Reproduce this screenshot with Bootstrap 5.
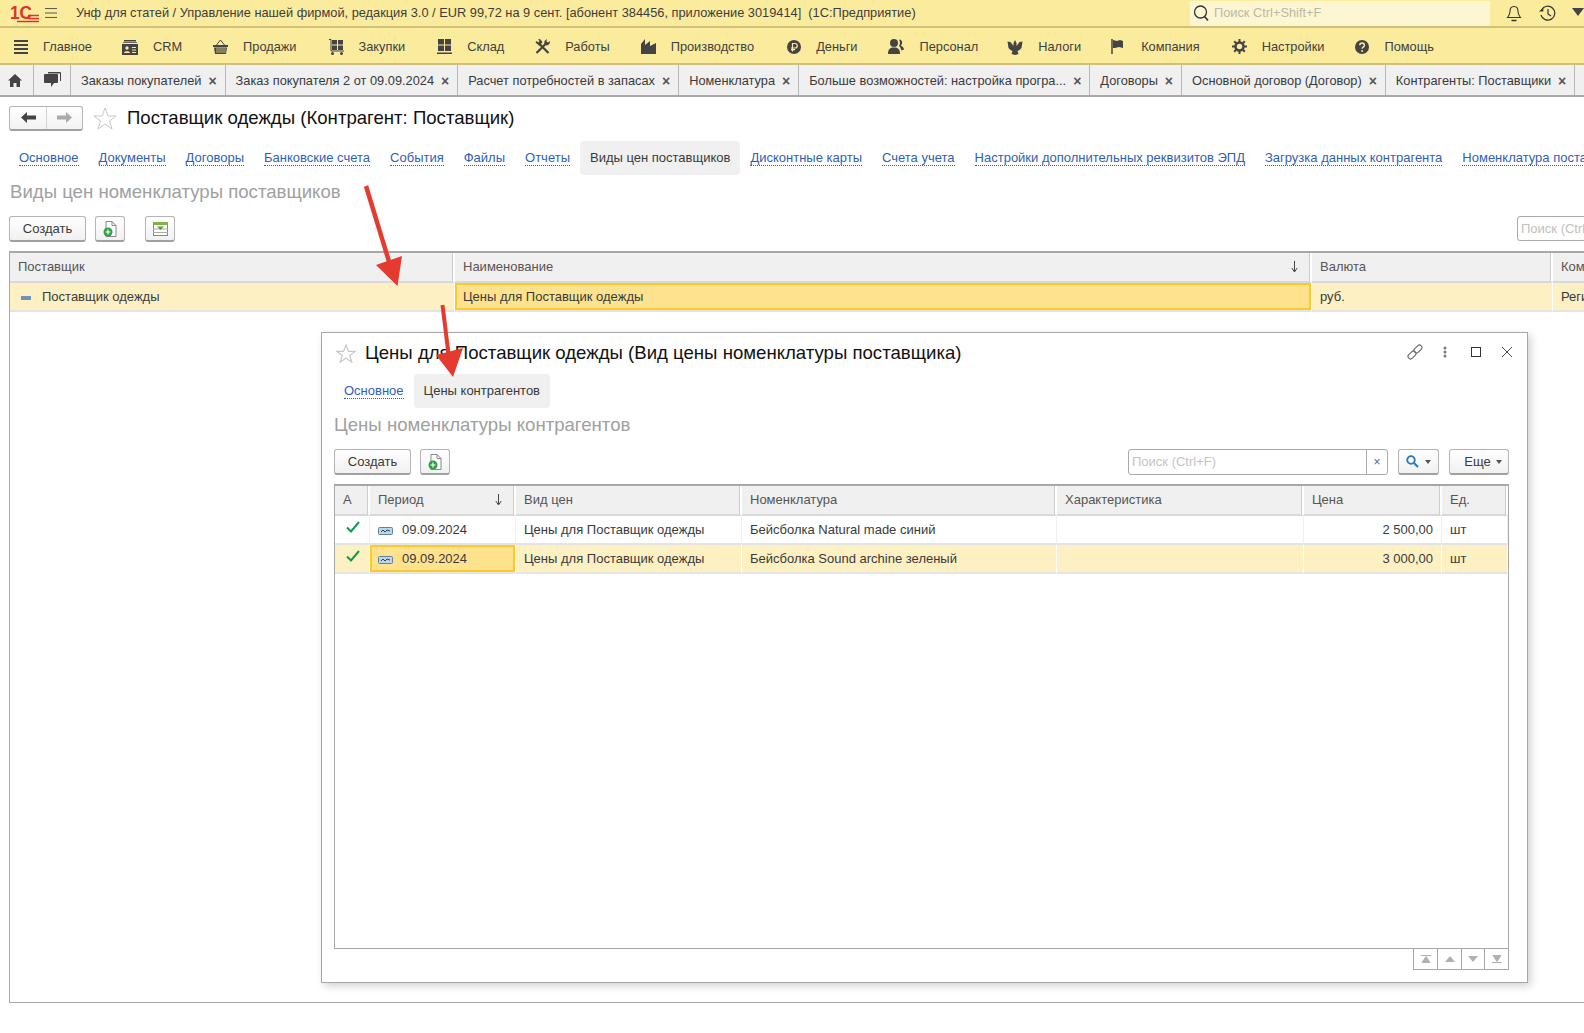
<!DOCTYPE html>
<html lang="ru">
<head>
<meta charset="utf-8">
<title>1С</title>
<link href="https://cdn.jsdelivr.net/npm/bootstrap@5.3.0/dist/css/bootstrap.min.css" rel="stylesheet">
<style>
html,body{height:100%;}
body{width:1584px;height:1033px;overflow:hidden;position:relative;background:#fff;font-family:"Liberation Sans",Arial,sans-serif;font-size:13px;color:#333;}
.title-bar{height:28px;background:#fbeb9d;border-bottom:2px solid #d0c07a;font-size:12.8px;}
.logo-box{width:42px;margin-left:10px;}
.menu-ico{margin-left:1px;margin-right:19px;}
.title-text{color:#3d3d3d;white-space:pre;width:1114px;flex:none;}
.global-search{width:300px;height:25px;background:#fdf6d3;border-radius:0 0 3px 3px;color:#bdb9a3;padding-left:3px;flex:none;}
.top-ico{margin-left:16px;flex:none;}
.sec-bar{height:37px;background:#fbeb9d;border-bottom:2px solid #d0c07a;padding:2px 0 0 14px;font-size:12.8px;}
.sec-item{display:flex;align-items:center;white-space:nowrap;color:#3f3f3f;margin-right:31px;}
.sec-item svg{flex:none;margin-right:15px;}
.sec-item:nth-child(1){margin-right:30px}
.sec-item:nth-child(3),.sec-item:nth-child(4),.sec-item:nth-child(11){margin-right:32px}
.sec-item:nth-child(7){margin-right:33px}
.sec-item:nth-child(9){margin-right:29px}
.sec-item:nth-child(10){margin-right:30px}
.tab-bar{height:32px;background:#f0f0f0;border-bottom:2px solid #a9a9a9;overflow:hidden;font-size:12.8px;}
.tab-ico{height:30px;border-right:1px solid #b8b8b8;}
.tab-home{width:34px;padding-right:4px;}
.tab-chat{width:37px;}
.tab-page{height:30px;border-right:1px solid #b8b8b8;padding:2px 0 0 10px;white-space:nowrap;color:#3a3a3a;flex:none;}
.tab-x{font-size:14px;font-weight:700;color:#555;margin-left:7px;margin-right:8px;line-height:1;}
.head-row{height:36px;margin-top:3px;padding-left:9px;}
.nav-pair{width:74px;height:25px;border:1px solid #b4b4b4;border-bottom:2px solid #a0a0a0;border-radius:3px;background:linear-gradient(#fff,#f2f2f2);flex:none;}
.nav-half{width:50%;height:100%;}
.nav-half+.nav-half{border-left:1px solid #d4d4d4;}
.page-star{margin:0 10px 0 10px;}
.page-title{font-size:18.6px;color:#111;white-space:nowrap;}
.links-row{padding-left:9px;height:34px;margin-top:5px;white-space:nowrap;}
.form-link{color:#2f5fb4;text-decoration:none;border-bottom:1px dotted #2f5fb4;line-height:14px;margin:0 10px;flex:none;}
.form-tab{background:#f0f0f0;border-radius:4px;height:34px;padding:0 10px;color:#3a3a3a;flex:none;}
.group-head{font-size:18.6px;color:#a0a0a0;margin:6px 0 0 10px;line-height:22px;white-space:nowrap;}
.tool-row{height:26px;width:1588px;margin:13px 0 9px 9px;}
.btn-1c{height:26px;border:1px solid #b4b4b4;border-bottom:2px solid #a0a0a0;border-radius:3px;background:linear-gradient(#fff,#f1f1f1);color:#3a3a3a;font-size:13px;padding:0;display:flex;align-items:center;justify-content:center;flex:none;}
.btn-make{width:77px;}
.btn-icon{width:30px;margin-left:9px;}
.btn-icon2{margin-left:20px;}
.search-clip{margin-left:auto;width:80px;height:25px;border:1px solid #aaa;border-radius:3px;color:#c0c0c0;padding:3px;white-space:nowrap;overflow:hidden;line-height:17px;flex:none;}
.grid-frame{margin-left:9px;width:1600px;height:752px;border:1px solid #a8a8a8;border-top-width:2px;overflow:hidden;}
.data-grid{table-layout:fixed;border-collapse:separate;border-spacing:0;margin:0;width:2003px;}
.data-grid th{background:#f0f0f0;font-weight:400;color:#555;height:30px;padding:0 8px;border-right:2px solid #fff;border-bottom:2px solid #d8d8d8;white-space:nowrap;overflow:hidden;position:relative;box-shadow:inset -1px 0 0 #ccc;}
.data-grid td{height:29px;padding:0 8px;color:#3a3a3a;border-bottom:2px solid #e4e4e4;border-right:1px solid #f0f0f0;white-space:nowrap;overflow:hidden;}
.row-on td{background:#fdf0c2;border-right-color:#fff;}
.data-grid td.cell-on{background:#fee28e;box-shadow:inset 0 0 0 2px #fdca2a;}
.sort-ar{position:absolute;right:12px;top:8px;}
.c-a{width:445px}.c-b{width:857px}.c-c{width:241px}.c-d{width:460px}
.tree-ico{margin:0 11px 0 3px;vertical-align:1px;}
.float-win{position:absolute;left:321px;top:332px;width:1207px;height:651px;background:#fff;border:1px solid #a8a8a8;box-shadow:3px 3px 8px rgba(0,0,0,.18);padding:0 18px 0 12px;}
.win-head{height:40px;}
.win-star{margin:0 9px 0 2px;}
.win-title{font-size:18.6px;color:#111;white-space:nowrap;}
.win-ctrls{position:absolute;left:1085px;top:11px;gap:16px;}
.win-links{margin:1px 0 0 0;height:34px;}
.win-head2{margin:6px 0 0 0;}
.win-tools{height:26px;margin:13px 0 9px;}
.win-search{position:relative;width:260px;height:26px;margin-left:auto;border:1px solid #aaa;border-radius:3px;color:#c4c4c4;padding-left:3px;}
.win-clear{position:absolute;right:0;top:0;bottom:0;width:21px;border-left:1px solid #aaa;color:#666;font-size:12px;}
.btn-find{width:41px;margin-left:10px;gap:6px;}
.btn-more{width:60px;margin-left:10px;gap:5px;padding-left:8px;}
.caret-1c{width:0;height:0;border:3px solid transparent;border-top:4px solid #555;border-bottom:0;}
.win-grid-box{position:relative;width:1175px;height:465px;border:1px solid #a8a8a8;border-top-width:2px;}
.win-grid{width:1173px;}
.w1{width:35px}.w2{width:146px}.w3{width:226px}.w4{width:315px}.w5{width:247px}.w6{width:138px}.w7{width:66px}
.num-cell{text-align:right;}
.per-ico{margin-right:9px;vertical-align:-1px;}
.chk{display:block;margin:-6px 0 0 3px;}
.pager{width:96px;height:21px;margin-left:1079px;border:1px solid #a8a8a8;border-top:0;}
.pager-cell{width:24px;height:100%;}
.pager-cell+.pager-cell{border-left:1px solid #a8a8a8;}
.arrow-layer{position:absolute;left:0;top:0;pointer-events:none;}
</style>
</head>
<body>

<div class="title-bar d-flex align-items-center">
  <div class="logo-box">
    <svg width="30" height="18" viewBox="0 0 30 18"><text x="0" y="14" font-family="Liberation Sans" font-weight="700" font-size="18" fill="#e0312a" textLength="22" lengthAdjust="spacingAndGlyphs">1С</text><path d="M18 10.500h11M18 13.500h11M7 16.500h22" stroke="#e0312a" stroke-width="1.600" fill="none"/></svg>
  </div>
  <svg class="menu-ico" width="15" height="12" viewBox="0 0 15 12"><path d="M0 .5h15M0 6h15M0 11.500h15" stroke="#333" fill="none"/></svg>
  <div class="title-text">Унф для статей / Управление нашей фирмой, редакция 3.0 / EUR 99,72 на 9 сент. [абонент 384456, приложение 3019414]  (1С:Предприятие)</div>
  <div class="global-search d-flex align-items-center"><svg width="17" height="18" viewBox="0 0 17 18"><circle cx="7.500" cy="8" r="6" fill="none" stroke="#333" stroke-width="1.300"/><path d="M11.500 12.500l3.500 4" stroke="#333" stroke-width="1.600"/></svg><span class="ms-1">Поиск Ctrl+Shift+F</span></div>
  <svg class="top-ico" width="16" height="17" viewBox="0 0 16 17"><path d="M8 1.500c-3 0-4 2-4 5 0 3-1 4-2.500 6h13c-1.500-2-2.500-3-2.500-6 0-3-1-5-4-5z" fill="none" stroke="#333" stroke-width="1.100"/><path d="M5.500 15.500h5" stroke="#333" stroke-width="1.500"/></svg>
  <svg class="top-ico" width="18" height="17" viewBox="0 0 18 17"><path d="M3.500 5a7 7 0 1 1-.5 5" fill="none" stroke="#333" stroke-width="1.200"/><path d="M.8 6.500h4.500V3z" fill="#333"/><path d="M10 4v5l3 2" fill="none" stroke="#333" stroke-width="1.200"/></svg>
  <svg class="top-ico" width="12" height="10" viewBox="0 0 12 10"><path d="M0 0h12l-6 8z" fill="#444"/></svg>
</div>

<div class="sec-bar d-flex align-items-center">
  <div class="sec-item"><svg width="14" height="14" viewBox="0 0 14 14"><path d="M0 1h14M0 5h14M0 9h14M0 13h14" stroke="#444" stroke-width="2"/></svg>Главное</div>
  <div class="sec-item"><svg width="16" height="16" viewBox="0 0 16 16"><path d="M2 2.500h12V1H2zM1 4h14V3.300H1zM0 5h16v11H0z" fill="#444"/><circle cx="5" cy="9" r="1.700" fill="#fbeb9d"/><path d="M2 14c0-2.500 6-2.500 6 0z" fill="#fbeb9d"/><path d="M10 8.500h4M10 11h4M10 13.500h4" stroke="#fbeb9d"/></svg>CRM</div>
  <div class="sec-item"><svg width="15" height="15" viewBox="0 0 15 15"><path d="M3.500 6L7.500 1l4 5" fill="none" stroke="#444"/><path d="M0 6h15v2H0zM1 8.500h13L13 15H2z" fill="#444"/><path d="M4 9v5M6 9v5M8 9v5M10 9v5M12 9v5" stroke="#fbeb9d" stroke-width=".7"/></svg>Продажи</div>
  <div class="sec-item"><svg width="15" height="16" viewBox="0 0 15 16"><path d="M0 .5h2V12h13" fill="none" stroke="#444"/><path d="M3 1h5v4.500H3zM9 1h5v4.500H9zM3 6.500h5V11H3zM9 6.500h5V11H9z" fill="#444"/><circle cx="3.500" cy="14.500" r="1.500" fill="#444"/><circle cx="12.500" cy="14.500" r="1.500" fill="#444"/></svg>Закупки</div>
  <div class="sec-item"><svg width="15" height="15" viewBox="0 0 15 15"><path d="M1 0h6v5.500H1zM8 0h6v5.500H8zM1 6.500h6V12H1zM8 6.500h6V12H8zM0 13.500h15V15H0z" fill="#444"/></svg>Склад</div>
  <div class="sec-item"><svg width="15" height="15" viewBox="0 0 15 15"><path d="M1.500 14L10 5.500M13.500 14L4.500 5" stroke="#444" stroke-width="2.200"/><path d="M4.500 7L.5 3.500 1.500 2l2 1.500L4.500 2 3 .5 5 0l2.500 3zM9 6L9.500 2 12 0l-.5 2.500 1.500 1 2-1.500-.5 3-2.500 1.500z" fill="#444"/></svg>Работы</div>
  <div class="sec-item"><svg width="15" height="15" viewBox="0 0 15 15"><path d="M0 15V5l4-5v6l5-4v5l6-3v11z" fill="#444"/></svg>Производство</div>
  <div class="sec-item"><svg width="14" height="14" viewBox="0 0 14 14"><circle cx="7" cy="7" r="7" fill="#444"/><path d="M5.500 11.500V3.500h2.500a2 2 0 0 1 0 4.500H4M4 9.700h4" fill="none" stroke="#fbeb9d" stroke-width="1.200"/></svg>Деньги</div>
  <div class="sec-item"><svg width="16" height="15" viewBox="0 0 16 15"><circle cx="6" cy="4" r="4" fill="#444"/><path d="M0 15c0-5 2-6.500 6-6.500s6 1.500 6 6.500z" fill="#444"/><path d="M11 .5c2.500 0 3.500 2 3 4l-1 2.500c2 .5 3 2 3 3.500l-2.500 1-1.500-3.500-1-1c1-1.500 1.500-4 0-6.500z" fill="#444"/></svg>Персонал</div>
  <div class="sec-item"><svg width="16" height="16" viewBox="0 0 16 16"><path d="M8 1l1.500 3v3l3-4 3-.5-1 6.500-2 2-2 1 1 3-3.500 1-3.500-1 1-3-2-1-2-2-1-6.500 3 .5 3 4V4z" fill="#444"/></svg>Налоги</div>
  <div class="sec-item"><svg width="15" height="15" viewBox="0 0 15 15"><path d="M1 0v15" stroke="#444" stroke-width="1.500"/><path d="M2 1l4 1 3-1 3 1v7l-4-1-4 1H2z" fill="#444"/></svg>Компания</div>
  <div class="sec-item"><svg width="15" height="15" viewBox="0 0 15 15"><circle cx="7.500" cy="7.500" r="4" fill="none" stroke="#444" stroke-width="2.500"/><path d="M7.500 0v3M7.500 12v3M0 7.500h3M12 7.500h3M2.200 2.200l2 2M10.800 10.800l2 2M2.200 12.800l2-2M10.800 4.200l2-2" stroke="#444" stroke-width="2"/></svg>Настройки</div>
  <div class="sec-item"><svg width="14" height="14" viewBox="0 0 14 14"><circle cx="7" cy="7" r="7" fill="#444"/><path d="M4.800 5.300c0-3 4.600-3 4.600 0 0 1.800-2.300 1.800-2.300 3.500" fill="none" stroke="#fbeb9d" stroke-width="1.500"/><circle cx="7.100" cy="11" r="1" fill="#fbeb9d"/></svg>Помощь</div>
</div>

<div class="tab-bar d-flex align-items-start">
  <div class="tab-ico tab-home d-flex align-items-center justify-content-center"><svg width="14" height="13" viewBox="0 0 14 13"><path d="M7 0l7 6.500h-2V13H8.500V9h-3v4H2V6.500H0z" fill="#444"/></svg></div>
  <div class="tab-ico tab-chat d-flex align-items-center justify-content-center"><svg width="17" height="16" viewBox="0 0 17 16"><path d="M4 0h12a1 1 0 0 1 1 1v8h-1V1.500H4z" fill="#444"/><path d="M1 2h12a1 1 0 0 1 1 1v7a1 1 0 0 1-1 1h-3l-3 4v-4H1a1 1 0 0 1-1-1V3a1 1 0 0 1 1-1z" fill="#444"/></svg></div>
  <div class="tab-page d-flex align-items-center">Заказы покупателей<span class="tab-x">×</span></div>
  <div class="tab-page d-flex align-items-center">Заказ покупателя 2 от 09.09.2024<span class="tab-x">×</span></div>
  <div class="tab-page d-flex align-items-center">Расчет потребностей в запасах<span class="tab-x">×</span></div>
  <div class="tab-page d-flex align-items-center">Номенклатура<span class="tab-x">×</span></div>
  <div class="tab-page d-flex align-items-center">Больше возможностей: настройка програ...<span class="tab-x">×</span></div>
  <div class="tab-page d-flex align-items-center">Договоры<span class="tab-x">×</span></div>
  <div class="tab-page d-flex align-items-center">Основной договор (Договор)<span class="tab-x">×</span></div>
  <div class="tab-page d-flex align-items-center">Контрагенты: Поставщики<span class="tab-x">×</span></div>
</div>

<div class="head-row d-flex align-items-center">
  <div class="nav-pair d-flex">
    <div class="nav-half d-flex align-items-center justify-content-center"><svg width="15" height="11" viewBox="0 0 15 11"><path d="M0 5.500L6 0v3.500h9v4H6V11z" fill="#444"/></svg></div>
    <div class="nav-half d-flex align-items-center justify-content-center"><svg width="15" height="11" viewBox="0 0 15 11"><path d="M15 5.500L9 0v3.500H0v4h9V11z" fill="#aaa"/></svg></div>
  </div>
  <svg class="page-star" width="24" height="23" viewBox="0 0 24 23"><path d="M12 1l3 8h8l-6.500 5 2.500 8-7-5-7 5 2.500-8L1 9h8z" fill="#fff" stroke="#c8c8c8"/></svg>
  <div class="page-title">Поставщик одежды (Контрагент: Поставщик)</div>
</div>

<div class="links-row d-flex align-items-center">
  <a class="form-link" href="#">Основное</a>
  <a class="form-link" href="#">Документы</a>
  <a class="form-link" href="#">Договоры</a>
  <a class="form-link" href="#">Банковские счета</a>
  <a class="form-link" href="#">События</a>
  <a class="form-link" href="#">Файлы</a>
  <a class="form-link" href="#">Отчеты</a>
  <div class="form-tab d-flex align-items-center">Виды цен поставщиков</div>
  <a class="form-link" href="#">Дисконтные карты</a>
  <a class="form-link" href="#">Счета учета</a>
  <a class="form-link" href="#">Настройки дополнительных реквизитов ЭПД</a>
  <a class="form-link" href="#">Загрузка данных контрагента</a>
  <a class="form-link" href="#">Номенклатура поставщика</a>
</div>

<div class="group-head">Виды цен номенклатуры поставщиков</div>

<div class="tool-row d-flex">
  <button class="btn-1c btn-make" type="button">Создать</button>
  <button class="btn-1c btn-icon" type="button"><svg width="14" height="16" viewBox="0 0 14 16"><path d="M3 .5h6l4 4v11H3z" fill="#fff" stroke="#888"/><path d="M9 .5v4h4" fill="none" stroke="#888"/><circle cx="5" cy="11" r="4.500" fill="#2ea043"/><path d="M5 8.500v5M2.500 11h5" stroke="#fff" stroke-width="1.200"/></svg></button>
  <button class="btn-1c btn-icon btn-icon2" type="button"><svg width="15" height="14" viewBox="0 0 15 14"><rect x=".5" y=".5" width="14" height="13" fill="#fff" stroke="#888"/><rect x="0" y="0" width="15" height="3" fill="#7fb34a"/><path d="M0 7h15M0 10.500h15" stroke="#aaa"/><path d="M4 4.500h7L7.500 8z" fill="#5b9e2f"/></svg></button>
  <div class="search-clip">Поиск (Ctrl+F)</div>
</div>

<div class="grid-frame">
  <table class="data-grid">
    <colgroup><col class="c-a"><col class="c-b"><col class="c-c"><col class="c-d"></colgroup>
    <thead><tr><th>Поставщик</th><th>Наименование<svg class="sort-ar" width="7" height="12" viewBox="0 0 7 12"><path d="M3.500 0v10M.8 7l2.700 4 2.700-4" fill="none" stroke="#444"/></svg></th><th>Валюта</th><th>Комментарий</th></tr></thead>
    <tbody><tr class="row-on"><td><svg class="tree-ico" width="10" height="4" viewBox="0 0 10 4"><rect width="10" height="4" fill="#6d94b8"/></svg>Поставщик одежды</td><td class="cell-on">Цены для Поставщик одежды</td><td>руб.</td><td>Регистрация</td></tr></tbody>
  </table>
</div>

<div class="float-win">
  <div class="win-head d-flex align-items-center">
    <svg class="win-star" width="20" height="19" viewBox="0 0 24 23"><path d="M12 1l3 8h8l-6.500 5 2.500 8-7-5-7 5 2.500-8L1 9h8z" fill="#fff" stroke="#c8c8c8" stroke-width="1.500"/></svg>
    <div class="win-title">Цены для Поставщик одежды (Вид цены номенклатуры поставщика)</div>
  </div>
  <div class="win-ctrls d-flex align-items-center">
    <svg width="16" height="16" viewBox="0 0 16 16"><g fill="none" stroke="#666" stroke-width="1.100"><rect x="-4.500" y="-2.500" width="9" height="5" rx="2.500" transform="translate(5 11) rotate(-45)"/><rect x="-4.500" y="-2.500" width="9" height="5" rx="2.500" transform="translate(11 5) rotate(-45)"/></g></svg>
    <svg class="mx-1" width="4" height="12" viewBox="0 0 4 12"><circle cx="2" cy="2" r="1.500" fill="#777"/><circle cx="2" cy="6" r="1.500" fill="#777"/><circle cx="2" cy="10" r="1.500" fill="#777"/></svg>
    <svg class="ms-1" width="10" height="10" viewBox="0 0 10 10"><rect x=".5" y=".5" width="9" height="9" fill="none" stroke="#333"/></svg>
    <svg class="ms-1" width="12" height="12" viewBox="0 0 12 12"><path d="M1 1l10 10M11 1L1 11" stroke="#444"/></svg>
  </div>
  <div class="win-links d-flex align-items-center">
    <a class="form-link" href="#">Основное</a>
    <div class="form-tab d-flex align-items-center">Цены контрагентов</div>
  </div>
  <div class="group-head win-head2">Цены номенклатуры контрагентов</div>
  <div class="win-tools d-flex">
    <button class="btn-1c btn-make" type="button">Создать</button>
    <button class="btn-1c btn-icon" type="button"><svg width="14" height="16" viewBox="0 0 14 16"><path d="M3 .5h6l4 4v11H3z" fill="#fff" stroke="#888"/><path d="M9 .5v4h4" fill="none" stroke="#888"/><circle cx="5" cy="11" r="4.500" fill="#2ea043"/><path d="M5 8.500v5M2.500 11h5" stroke="#fff" stroke-width="1.200"/></svg></button>
    <div class="win-search d-flex align-items-center">Поиск (Ctrl+F)<span class="win-clear d-flex align-items-center justify-content-center">×</span></div>
    <button class="btn-1c btn-find" type="button"><svg width="13" height="13" viewBox="0 0 13 13"><circle cx="5" cy="5" r="3.800" fill="none" stroke="#2a78b8" stroke-width="1.800"/><path d="M8 8l4 4" stroke="#2a78b8" stroke-width="2.200"/></svg><span class="caret-1c"></span></button>
    <button class="btn-1c btn-more" type="button">Еще<span class="caret-1c"></span></button>
  </div>
  <div class="win-grid-box">
    <table class="data-grid win-grid">
      <colgroup><col class="w1"><col class="w2"><col class="w3"><col class="w4"><col class="w5"><col class="w6"><col class="w7"></colgroup>
      <thead><tr><th>А</th><th>Период<svg class="sort-ar" width="7" height="12" viewBox="0 0 7 12"><path d="M3.500 0v10M.8 7l2.700 4 2.700-4" fill="none" stroke="#444"/></svg></th><th>Вид цен</th><th>Номенклатура</th><th>Характеристика</th><th>Цена</th><th>Ед.</th></tr></thead>
      <tbody>
        <tr><td><svg class="chk" width="14" height="12" viewBox="0 0 14 12"><path d="M1 6.500l4 4 8-9.500" fill="none" stroke="#129a55" stroke-width="2"/></svg></td><td><svg class="per-ico" width="15" height="8" viewBox="0 0 15 8"><rect x=".5" y=".5" width="14" height="7" rx="1" fill="#bcd3e8" stroke="#5f82a3"/><path d="M3 5l2-2 2 2 2-2 3 1" fill="none" stroke="#345"/></svg>09.09.2024</td><td>Цены для Поставщик одежды</td><td>Бейсболка Natural made синий</td><td></td><td class="num-cell">2 500,00</td><td>шт</td></tr>
        <tr class="row-on"><td><svg class="chk" width="14" height="12" viewBox="0 0 14 12"><path d="M1 6.500l4 4 8-9.500" fill="none" stroke="#129a55" stroke-width="2"/></svg></td><td class="cell-on"><svg class="per-ico" width="15" height="8" viewBox="0 0 15 8"><rect x=".5" y=".5" width="14" height="7" rx="1" fill="#bcd3e8" stroke="#5f82a3"/><path d="M3 5l2-2 2 2 2-2 3 1" fill="none" stroke="#345"/></svg>09.09.2024</td><td>Цены для Поставщик одежды</td><td>Бейсболка Sound archine зеленый</td><td></td><td class="num-cell">3 000,00</td><td>шт</td></tr>
      </tbody>
    </table>
  </div>
  <div class="pager d-flex">
    <div class="pager-cell d-flex align-items-center justify-content-center"><svg width="10" height="8" viewBox="0 0 10 8"><path d="M0 .5h10M5 1.500L9 7.500H1z" stroke="#b0b0b0" fill="#b0b0b0"/></svg></div>
    <div class="pager-cell d-flex align-items-center justify-content-center"><svg width="10" height="6" viewBox="0 0 10 6"><path d="M5 0l5 6H0z" fill="#b0b0b0"/></svg></div>
    <div class="pager-cell d-flex align-items-center justify-content-center"><svg width="10" height="6" viewBox="0 0 10 6"><path d="M5 6l5-6H0z" fill="#b0b0b0"/></svg></div>
    <div class="pager-cell d-flex align-items-center justify-content-center"><svg width="10" height="8" viewBox="0 0 10 8"><path d="M0 7.500h10M5 6.500L9 .5H1z" stroke="#b0b0b0" fill="#b0b0b0"/></svg></div>
  </div>
</div>

<svg class="arrow-layer" width="1584" height="1033" viewBox="0 0 1584 1033">
  <path d="M366 186L391 268" stroke="#e53a2f" stroke-width="4.500" fill="none"/>
  <path d="M397.500 286L376 265 402 256z" fill="#e53a2f"/>
  <path d="M442.500 305L449 358" stroke="#e53a2f" stroke-width="4" fill="none"/>
  <path d="M453 377L436 355 463 348z" fill="#e53a2f"/>
</svg>

<script src="https://cdn.jsdelivr.net/npm/bootstrap@5.3.0/dist/js/bootstrap.bundle.min.js"></script>
</body>
</html>
